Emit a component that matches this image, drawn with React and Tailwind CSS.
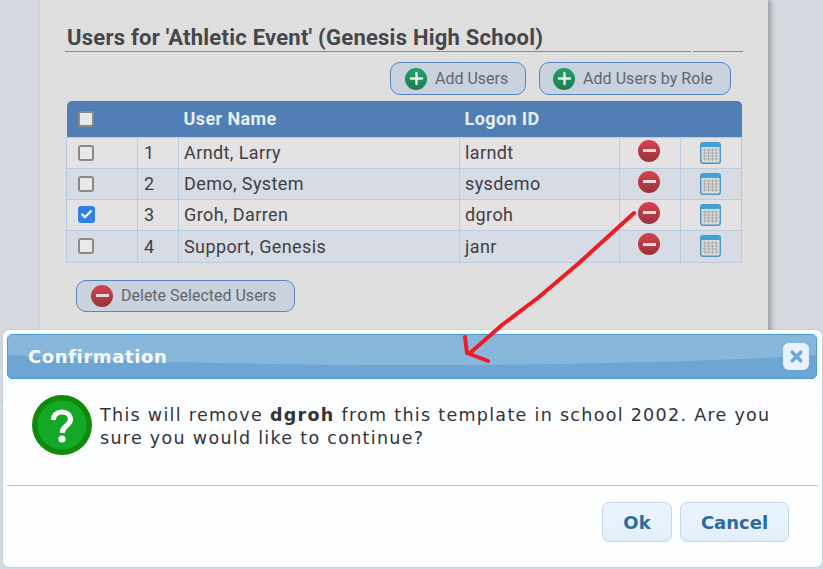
import { Plus, Check, X } from 'lucide-react';

const users = [
  { id: 1, name: 'Arndt, Larry', logon: 'larndt', checked: false },
  { id: 2, name: 'Demo, System', logon: 'sysdemo', checked: false },
  { id: 3, name: 'Groh, Darren', logon: 'dgroh', checked: true },
  { id: 4, name: 'Support, Genesis', logon: 'janr', checked: false },
];

function RoundIcon({ type, size = 22 }) {
  const isAdd = type === 'add';
  return (
    <span
      className={`flex shrink-0 items-center justify-center rounded-full ${
        isAdd
          ? 'bg-gradient-to-b from-[#21a06a] to-[#1f7d50]'
          : 'bg-gradient-to-b from-[#d8434f] to-[#96333c]'
      }`}
      style={{ width: size, height: size }}
    >
      {isAdd ? (
        <Plus size={size - 3} strokeWidth={3} className="text-[#e8f2ee]" />
      ) : (
        <span className="h-[3px] w-[13px] bg-[#e6d9da]" />
      )}
    </span>
  );
}

function CalendarIcon() {
  return (
    <svg width="21" height="22" viewBox="0 0 22 22" className="block" preserveAspectRatio="none">
      <rect x="0.75" y="0.75" width="20.5" height="20.5" rx="2.5" fill="#dcdcdc" stroke="#4d97c4" strokeWidth="1.5" />
      <rect x="1" y="1" width="20" height="4" fill="#3ea3d6" />
      <path d="M3 8h16M3 11h16M3 14h16M3 17h16M5 6v13M9 6v13M13 6v13M17 6v13" stroke="#a3a3a3" strokeWidth="0.8" fill="none" />
    </svg>
  );
}

function ActionButton({ type, label, className }) {
  return (
    <button
      className={`flex items-center rounded-[10px] border border-[#5585c5] bg-[#c8d3df] text-[16px] text-[#66666b] ${className}`}
    >
      <RoundIcon type={type} />
      <span>{label}</span>
    </button>
  );
}

function Checkbox({ checked, className = '' }) {
  if (checked) {
    return (
      <span className={`flex h-[17px] w-[17px] items-center justify-center rounded-[3px] bg-[#2f82e4] ${className}`}>
        <Check size={13} strokeWidth={4} className="text-white" />
      </span>
    );
  }
  return <span className={`block h-[16px] w-[16px] rounded-[3px] border-2 border-[#8a8a8a] bg-[#e9e9e9] ${className}`} />;
}

export default function App() {
  return (
    <div className="relative h-[569px] w-[823px] overflow-hidden bg-[#d3dbe7] font-['Roboto',sans-serif]">
      {/* page behind the dialog */}
      <div className="h-[402px] border-b border-[#c6c8cc] bg-[#d5d8de] pl-[40px]">
        <div className="h-[345px] w-[728px] bg-[#dfdfdf] pl-[25px] pt-[22px] shadow-[3px_0_5px_rgba(0,0,0,0.28)]">
          <div className="flex w-[678px] gap-[2px]">
            <h1 className="h-[30px] w-[626px] border-b border-[#8b8b8b] pl-[2px] text-[22px] font-bold leading-[31px] tracking-[0.24px] text-[#46464b]">
              Users for 'Athletic Event' (Genesis High School)
            </h1>
            <div className="w-[50px] border-b border-[#8b8b8b]" />
          </div>

          <div className="mt-[10px] flex w-[666px] justify-end gap-[13px]">
            <ActionButton type="add" label="Add Users" className="h-[33px] w-[136px] gap-[8px] pl-[14px]" />
            <ActionButton type="add" label="Add Users by Role" className="h-[33px] w-[192px] gap-[8px] pl-[13px] tracking-[0.05px]" />
          </div>

          <table className="ml-[1px] mt-[6px] w-[675px] table-fixed border-collapse text-[18px] tracking-[0.4px] text-[#3f4045]">
            <colgroup>
              <col className="w-[71px]" />
              <col className="w-[41px]" />
              <col className="w-[281px]" />
              <col className="w-[160px]" />
              <col className="w-[61px]" />
              <col className="w-[61px]" />
            </colgroup>
            <thead>
              <tr className="h-[36px] bg-[#517eb4] text-left text-[#e6edf5]">
                <th className="rounded-tl-[5px] pl-[11px]">
                  <Checkbox />
                </th>
                <th />
                <th className="pl-[5px] font-bold">User Name</th>
                <th className="pl-[5px] font-bold">Logon ID</th>
                <th />
                <th className="rounded-tr-[5px]" />
              </tr>
            </thead>
            <tbody>
              {users.map((u, i) => (
                <tr key={u.id} className={`h-[31px] last:h-[32px] ${i % 2 === 0 ? 'bg-[#e4e2e3]' : 'bg-[#d6dbe4]'}`}>
                  <td className="border border-[#b8cde2] pl-[11px]">
                    <Checkbox checked={u.checked} />
                  </td>
                  <td className="border border-[#b8cde2] pl-[6px]">{u.id}</td>
                  <td className="border border-[#b8cde2] pl-[5px]">{u.name}</td>
                  <td className="border border-[#b8cde2] pl-[5px]">{u.logon}</td>
                  <td className="border border-[#b8cde2] pr-[2px]">
                    <div className="mb-[4px] flex justify-center">
                      <RoundIcon type="remove" />
                    </div>
                  </td>
                  <td className="border border-[#b8cde2] pr-[2px]">
                    <div className="flex justify-center">
                      <CalendarIcon />
                    </div>
                  </td>
                </tr>
              ))}
            </tbody>
          </table>

          <ActionButton
            type="remove"
            label="Delete Selected Users"
            className="ml-[11px] mt-[17px] h-[32px] w-[219px] gap-[8px] pl-[14px] text-[15.5px]"
          />
        </div>
      </div>

      {/* confirmation dialog */}
      <div className="absolute left-[3px] top-[330px] flex h-[237px] w-[819px] flex-col rounded-[6px] bg-[#fcfdfe] p-[4px] font-['DejaVu_Sans',sans-serif] shadow-[0_0_2px_rgba(120,160,200,0.6)]">
        <div className="relative flex h-[45px] w-[810px] shrink-0 items-center overflow-hidden rounded-[5px] border border-[#4a9ad4] bg-[#6da5d3] pl-[20px]">
          <div className="absolute -left-[100px] -top-[20px] h-[50px] w-[1010px] rounded-[50%] bg-[#88b7dc]" />
          <span className="relative text-[18px] font-bold tracking-[0.6px] text-[#f7fbff]">Confirmation</span>
          <button className="absolute right-[7px] top-[8px] flex h-[27px] w-[26px] items-center justify-center rounded-[6px] bg-[#e8f2fb]">
            <X size={17} strokeWidth={5} className="text-[#6ea6d5]" />
          </button>
        </div>

        <div className="flex h-[107px] shrink-0 items-start border-b border-[#b3c7d8] pl-[25px] pt-[16px]">
          <svg width="60" height="60" viewBox="0 0 60 60" className="shrink-0">
            <circle cx="30" cy="30" r="30" fill="#0f8a0a" />
            <circle cx="30" cy="30" r="24.5" fill="#14a826" />
            <path d="M21.500 25c0-5 3.500-8 8.500-8s8.500 3 8.500 7.500c0 6-8 6-8.500 13.500" fill="none" stroke="#fff" strokeWidth="5" />
            <circle cx="30" cy="44" r="3.600" fill="#fff" />
          </svg>
          <p className="ml-[8px] mt-[9px] w-[690px] text-[17.5px] leading-[23px] tracking-[1.3px] text-[#333338]">
            This will remove <b>dgroh</b> from this template in school 2002. Are you sure you would like to continue?
          </p>
        </div>

        <div className="flex justify-end gap-[8px] pr-[29px] pt-[16px]">
          <button className="h-[40px] w-[70px] rounded-[7px] border border-[#c3d8ec] bg-gradient-to-b from-[#ebf4fd] to-[#e2effb] text-[18px] font-bold text-[#2f6a9c]">
            Ok
          </button>
          <button className="h-[40px] w-[109px] rounded-[7px] border border-[#c3d8ec] bg-gradient-to-b from-[#ebf4fd] to-[#e2effb] text-[18px] font-bold text-[#2f6a9c]">
            Cancel
          </button>
        </div>
      </div>

      {/* hand drawn arrow */}
      <svg className="pointer-events-none absolute left-0 top-0" width="823" height="569">
        <path
          d="M634 213 L579 263 L539 297 L502 325 L470 353 M465 337 L467 353 L488 361"
          fill="none"
          stroke="#ee1c25"
          strokeWidth="4"
          strokeLinecap="round"
          strokeLinejoin="round"
        />
      </svg>
    </div>
  );
}
